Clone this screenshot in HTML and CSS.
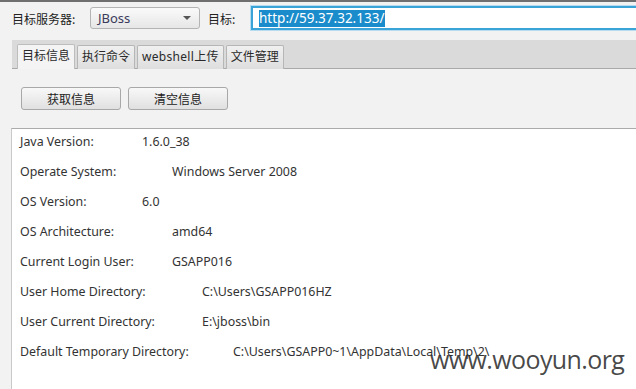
FILE: index.html
```html
<!DOCTYPE html>
<html>
<head>
<meta charset="utf-8">
<link rel="stylesheet" href="styles.css">
</head>
<body>
<div class="app">
  <div class="toolbar">
    <span class="lbl lbl-server">目标服务器:</span>
    <div class="select">
      <span class="select-text">JBoss</span>
      <span class="arrow"></span>
    </div>
    <span class="lbl lbl-target">目标:</span>
    <div class="input"><span class="sel">http://59.37.32.133/</span></div>
  </div>

  <div class="tabband">
    <div class="tab active">目标信息</div>
    <div class="tab">执行命令</div>
    <div class="tab tab-wide">webshell上传</div>
    <div class="tab">文件管理</div>
  </div>

  <div class="buttons">
    <button class="btn">获取信息</button>
    <button class="btn">清空信息</button>
  </div>

  <div class="output">
    <div class="row s4"><span class="k">Java Version:</span><span class="v">1.6.0_38</span></div>
    <div class="row s5"><span class="k">Operate System:</span><span class="v">Windows Server 2008</span></div>
    <div class="row s4"><span class="k">OS Version:</span><span class="v">6.0</span></div>
    <div class="row s5"><span class="k">OS Architecture:</span><span class="v">amd64</span></div>
    <div class="row s5"><span class="k">Current Login User:</span><span class="v">GSAPP016</span></div>
    <div class="row s6"><span class="k">User Home Directory:</span><span class="v">C:\Users\GSAPP016HZ</span></div>
    <div class="row s6"><span class="k">User Current Directory:</span><span class="v">E:\jboss\bin</span></div>
    <div class="row s7"><span class="k">Default Temporary Directory:</span><span class="v">C:\Users\GSAPP0~1\AppData\Local\Temp\2\</span></div>
  </div>

  <div class="watermark">www.wooyun.org</div>
</div>
</body>
</html>
```
FILE: styles.css
```css
html, body {
  margin: 0;
  padding: 0;
}
body {
  width: 636px;
  height: 389px;
  overflow: hidden;
  background: #f2f2f2;
  font-family: "Noto Sans", "Noto Sans CJK SC", sans-serif;
  font-size: 12px;
  color: #333;
}
.app {
  position: relative;
  height: 387px;
  border-top: 2px solid #6f6f6f;
}
.toolbar {
  display: flex;
  align-items: center;
  height: 24px;
  margin-top: 4px;
  padding-left: 12px;
}
.toolbar > * {
  flex-shrink: 0;
}
.lbl {
  font-family: "Noto Sans CJK SC", sans-serif;
  font-size: 12px;
  color: #222;
  white-space: nowrap;
}
.lbl-server { width: 78px; }
.lbl-target { width: 43px; }
.select {
  box-sizing: border-box;
  width: 110px;
  height: 22px;
  margin-right: 8px;
  border: 1px solid #b4b4b4;
  border-radius: 3px;
  background: linear-gradient(#fafafa, #e6e6e6);
  display: flex;
  align-items: center;
  justify-content: space-between;
  padding: 0 8px 0 7px;
}
.select-text {
  font-family: "Noto Sans", sans-serif;
  font-size: 13px;
  color: #3a3a5a;
}
.arrow {
  width: 0;
  height: 0;
  border-left: 4px solid transparent;
  border-right: 4px solid transparent;
  border-top: 4px solid #555;
}
.input {
  box-sizing: border-box;
  width: 400px;
  height: 24px;
  border: 2px solid #3aa3d8;
  box-shadow: 0 0 0 1px #b8dcef;
  background: #fff;
  display: flex;
  align-items: center;
  padding-left: 6px;
}
.sel {
  background: #1a8ccb;
  color: #fff;
  font-family: "Noto Sans", sans-serif;
  font-size: 13.5px;
  line-height: 17px;
  padding-right: 1px;
}
.tabband {
  display: flex;
  align-items: flex-end;
  gap: 2px;
  margin-top: 10px;
  margin-left: 12px;
  height: 28px;
  padding-left: 5px;
  background: #dadada;
  border-bottom: 1px solid #a9a9a9;
}
.tab {
  box-sizing: border-box;
  height: 24px;
  padding: 0 4px;
  margin-bottom: -1px;
  border: 1px solid #b6b6b6;
  border-bottom: none;
  border-radius: 2px 2px 0 0;
  background: linear-gradient(#f0f0f0, #dedede);
  font-family: "Noto Sans", "Noto Sans CJK SC", sans-serif;
  font-size: 12px;
  line-height: 22px;
  color: #2a2a2a;
  white-space: nowrap;
}
.tab-wide {
  letter-spacing: 0.3px;
}
.tab.active {
  background: #f4f4f4;
  height: 25px;
  border-color: #bdbdbd;
}
.buttons {
  display: flex;
  gap: 7px;
  margin-top: 18px;
  padding-left: 21px;
}
.btn {
  box-sizing: border-box;
  width: 100px;
  height: 23px;
  border: 1px solid #a8a8a8;
  border-radius: 3px;
  background: linear-gradient(#f8f8f8, #e0e0e0);
  font-family: "Noto Sans CJK SC", sans-serif;
  font-size: 12px;
  color: #222;
  padding: 0;
}
.output {
  margin-top: 18px;
  margin-left: 11px;
  height: 300px;
  background: #fff;
  border-top: 1px solid #ababab;
  border-left: 1px solid #c9c9c9;
  padding-left: 8px;
  padding-top: 2px;
}
.row {
  display: flex;
  font-size: 12.4px;
  line-height: 22px;
  margin-bottom: 8px;
  color: #333;
  white-space: nowrap;
}
.s4 .k { width: 122px; }
.s5 .k { width: 152px; }
.s6 .k { width: 182px; }
.s7 .k { width: 213px; }
.watermark {
  position: absolute;
  left: 430px;
  top: 342px;
  font-family: "Open Sans", sans-serif;
  font-size: 25px;
  letter-spacing: -0.6px;
  color: rgba(40, 40, 40, 0.85);
  line-height: 30px;
}
```
